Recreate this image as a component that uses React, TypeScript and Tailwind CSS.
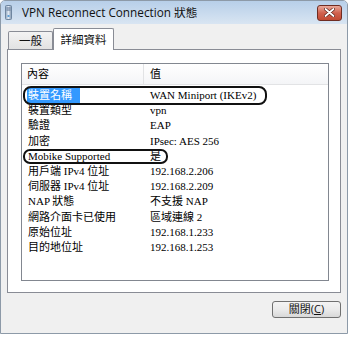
import React from "react";

const rows: [string, string][] = [
  ["裝置名稱", "WAN Miniport (IKEv2)"],
  ["裝置類型", "vpn"],
  ["驗證", "EAP"],
  ["加密", "IPsec: AES 256"],
  ["Mobike Supported", "是"],
  ["用戶端 IPv4 位址", "192.168.2.206"],
  ["伺服器 IPv4 位址", "192.168.2.209"],
  ["NAP 狀態", "不支援 NAP"],
  ["網路介面卡已使用", "區域連線 2"],
  ["原始位址", "192.168.1.233"],
  ["目的地位址", "192.168.1.253"],
];

const sans = { fontFamily: '"Open Sans", "Noto Sans CJK TC", sans-serif' };
const ming = { fontFamily: '"Liberation Serif", "Noto Sans CJK TC", serif' };

function ConnIcon() {
  return (
    <svg width="7" height="15" viewBox="0 0 7 15">
      <defs>
        <linearGradient id="ci" x1="0" x2="1">
          <stop offset="0" stopColor="#8fa6bf" />
          <stop offset="0.5" stopColor="#dfe8f2" />
          <stop offset="1" stopColor="#7d93ac" />
        </linearGradient>
      </defs>
      <rect x="0.5" y="0.5" width="6" height="14" rx="1" fill="url(#ci)" stroke="#6f86a0" />
      <line x1="1.5" y1="3" x2="5.5" y2="3" stroke="#5b7190" />
      <line x1="1.5" y1="5" x2="5.5" y2="5" stroke="#5b7190" />
      <rect x="2.5" y="10" width="2" height="2" fill="#5f9fd6" />
    </svg>
  );
}

function CloseButton() {
  return (
    <div className="w-[25px] h-[16px] rounded-[3px] border border-[#6f2c22] bg-gradient-to-b from-[#e9a99b] via-[#d0614e] to-[#c24a33] flex items-center justify-center">
      <svg width="11" height="9" viewBox="0 0 11 9">
        <path d="M1.5 1 L9.5 8 M9.5 1 L1.5 8" stroke="#5a2018" strokeWidth="3.2" strokeLinecap="round" />
        <path d="M1.5 1 L9.5 8 M9.5 1 L1.5 8" stroke="#ffffff" strokeWidth="1.8" strokeLinecap="round" />
      </svg>
    </div>
  );
}

export default function App() {
  return (
    <div className="w-[350px] h-[337px] bg-white">
      <div className="w-[348px] h-[334px] border border-[#8d9aa8] rounded-t-[5px] bg-[#f0f0f0] flex flex-col overflow-hidden">
        {/* title bar */}
        <div className="h-[23px] shrink-0 flex items-center pl-[4px] pr-[5px] bg-gradient-to-b from-[#b7cfe9] to-[#d9e5f2]">
          <ConnIcon />
          <span className="ml-[10px] text-[11.75px] text-[#111]" style={sans}>
            VPN Reconnect Connection 狀態
          </span>
          <div className="ml-auto">
            <CloseButton />
          </div>
        </div>

        {/* tabs */}
        <div className="h-[25px] shrink-0 flex items-end pl-[7px]" style={sans}>
          <div className="w-[45px] h-[18px] border border-b-0 border-[#898c95] rounded-t-[2px] bg-gradient-to-b from-[#f3f3f3] to-[#e2e2e2] flex items-center justify-center text-[11.5px] text-[#111]">
            一般
          </div>
          <div className="relative z-10 -mb-[1px] w-[61px] h-[22px] border border-b-0 border-[#898c95] rounded-t-[2px] bg-white flex items-center justify-center text-[11.5px] text-[#111]">
            詳細資料
          </div>
        </div>

        {/* tab panel */}
        <div className="mx-[6px] h-[244px] shrink-0 border border-[#898c95] bg-white pt-[13px] pl-[13px]">
          <div className="relative w-[308px] h-[218px] border border-[#828790] bg-white text-[11px] text-black" style={ming}>
            <div className="h-[21px] flex border-b border-[#e2e3e5] bg-gradient-to-b from-white to-[#f4f5f7]">
              <div className="w-[122px] pl-[5px] flex items-center border-r border-[#e2e3e5]">內容</div>
              <div className="pl-[6px] flex items-center">值</div>
            </div>
            <div className="pt-[3px]">
              {rows.map(([label, value], i) => (
                <div key={label} className="grid grid-cols-[128px_1fr] h-[15.2px] leading-[15.2px]">
                  <div className="pl-[5px] whitespace-nowrap">
                    {i === 0 ? (
                      <span className="inline-block w-[53px] pl-[1px] bg-[#3399ff] text-white">{label}</span>
                    ) : (
                      <span className="pl-[1px]">{label}</span>
                    )}
                  </div>
                  <div className="whitespace-nowrap">{value}</div>
                </div>
              ))}
            </div>

            {/* annotation outlines */}
            <div className="absolute left-[1px] top-[22px] w-[244px] h-[19px] border-2 border-[#111] rounded-[8px]" />
            <div className="absolute left-[1px] top-[85px] w-[145px] h-[15px] border-2 border-[#111] rounded-[7px]" />
          </div>
        </div>

        {/* footer */}
        <div className="mt-[8px] flex justify-end pr-[6px]">
          <button
            className="w-[69px] h-[17px] rounded-[3px] border border-[#707070] bg-gradient-to-b from-[#f4f4f4] via-[#ebebeb] to-[#d8d8d8] text-[11px] text-[#111] flex items-center justify-center"
            style={sans}
          >
            關閉(<span className="underline">C</span>)
          </button>
        </div>
      </div>
    </div>
  );
}
